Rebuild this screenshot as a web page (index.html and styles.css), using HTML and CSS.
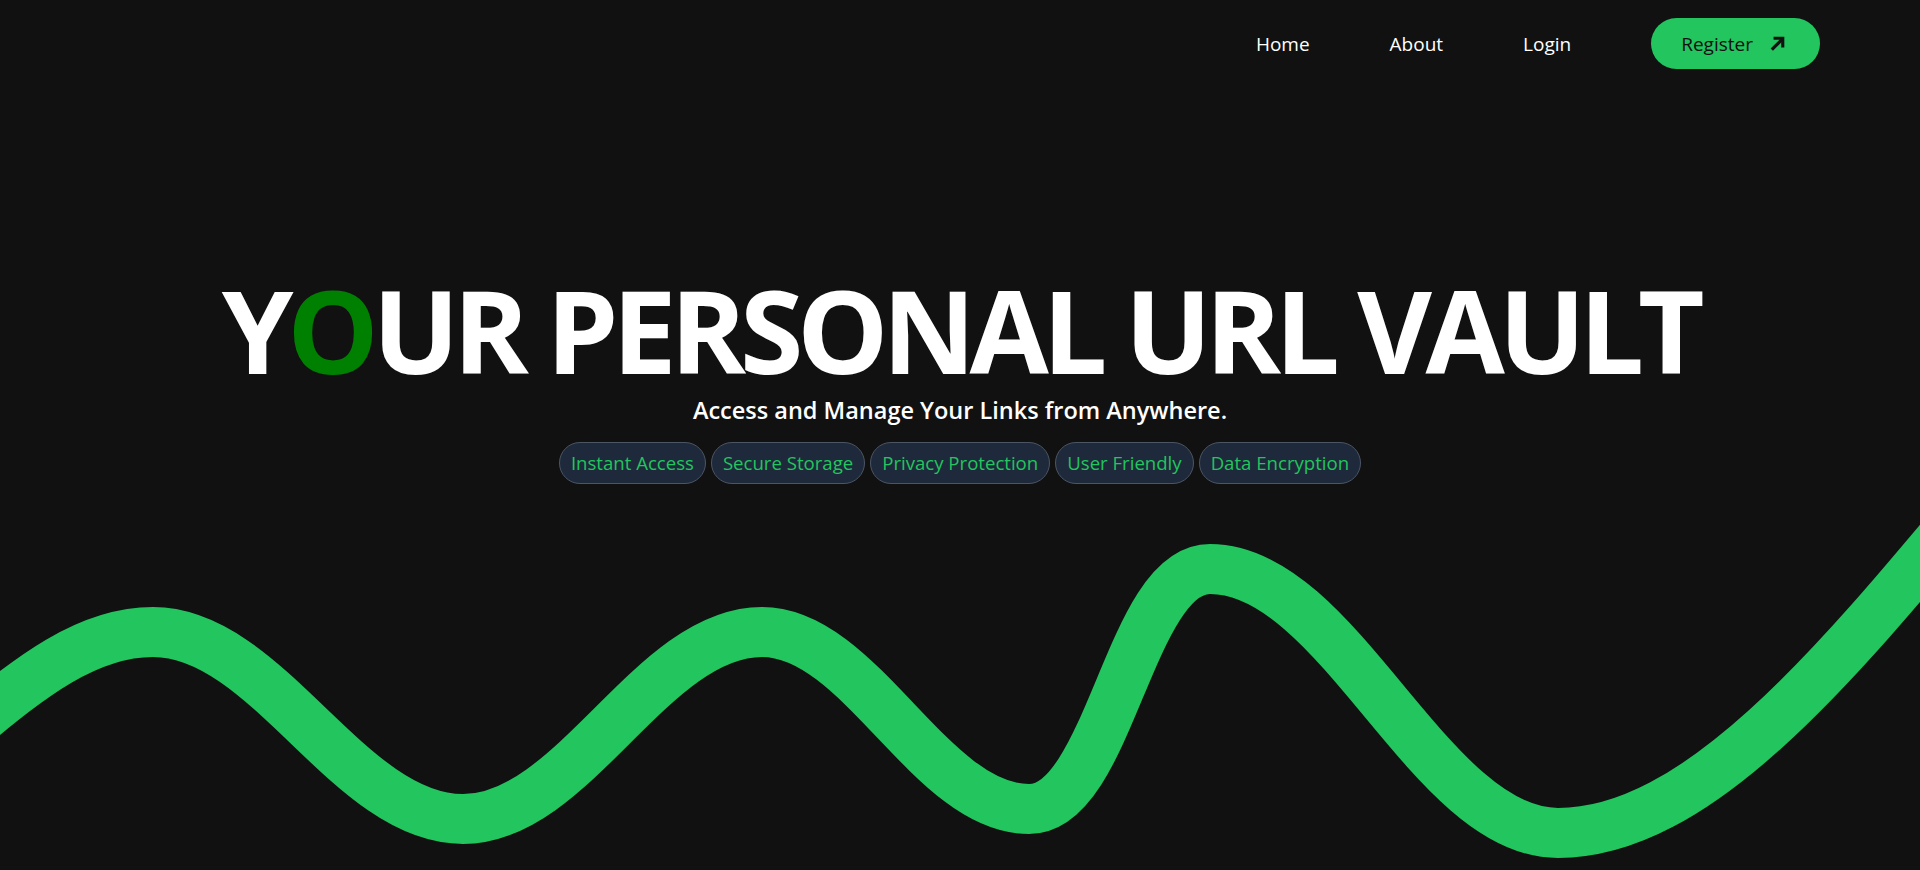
FILE: index.html
```html
<!DOCTYPE html>
<html lang="en">
<head>
<meta charset="utf-8">
<title>URL Vault</title>
<link rel="stylesheet" href="styles.css">
</head>
<body>
<div class="page">
  <header class="nav">
    <a class="nav-link" href="#">Home</a>
    <a class="nav-link" href="#">About</a>
    <a class="nav-link" href="#">Login</a>
    <a class="nav-btn" href="#">Register
      <svg class="nav-arrow" viewBox="0 0 24 24" width="21" height="21" fill="none" stroke="#111" stroke-width="3.6" stroke-linecap="butt" stroke-linejoin="miter"><path d="M5.5 19 L17 7.5"/><path d="M7.5 6 H18 V16.5"/></svg>
    </a>
  </header>
  <section class="hero">
    <h1 class="title">Y<span class="title-o">O</span>UR PERSONAL URL VAULT</h1>
    <p class="subtitle">Access and Manage Your Links from Anywhere.</p>
    <ul class="pills">
      <li class="pill">Instant Access</li>
      <li class="pill">Secure Storage</li>
      <li class="pill">Privacy Protection</li>
      <li class="pill">User Friendly</li>
      <li class="pill">Data Encryption</li>
    </ul>
  </section>
  <svg class="wave" viewBox="0 0 1920 370" width="1920" height="370" preserveAspectRatio="none">
    <path d="M -209 319 C -75 319, 19 132, 153 132 C 268 132, 348 319, 463 319 C 574 319, 651 132, 762 132 C 861 132, 930 309, 1029 309 C 1110 309, 1129 69, 1210 69 C 1339 69, 1429 333, 1558 333 C 1700 333, 1840 160, 1990 -20" fill="none" stroke="#22c55e" stroke-width="50"/>
  </svg>
</div>
</body>
</html>
```
FILE: styles.css
```css
* { box-sizing: border-box; }
html, body { margin: 0; padding: 0; background: #111111; }
body { font-family: "Open Sans", "Noto Sans", sans-serif; color: #fff; overflow: hidden; }
.page { height: 870px; display: flex; flex-direction: column; }
.nav { display: flex; justify-content: flex-end; align-items: center; gap: 80px; padding: 18px 100px 0 0; }
.nav-link { color: #fff; text-decoration: none; font-size: 19px; }
.nav-btn { display: flex; align-items: center; gap: 14px; height: 51px; padding: 0 32px 0 30px; border-radius: 26px; background: #22c55e; color: #111; text-decoration: none; font-size: 19px; }
.nav-arrow { display: block; }
.hero { margin-top: 203px; display: flex; flex-direction: column; align-items: center; }
.title { margin: 0; font-size: 115px; line-height: 1; font-weight: 700; letter-spacing: -6.3px; white-space: nowrap; }
.title-o { color: #008000; }
.subtitle { margin: 8px 0 0; font-size: 23.5px; line-height: 1.3; font-weight: 600; }
.pills { list-style: none; margin: 16px 0 0; padding: 0; display: flex; gap: 5px; }
.pill { height: 42px; display: flex; align-items: center; padding: 0 11px; border-radius: 21px; background: #1e293b; border: 1px solid #4b5563; color: #22c55e; font-size: 18.6px; }
.wave { display: block; margin-top: auto; flex-shrink: 0; }
```
